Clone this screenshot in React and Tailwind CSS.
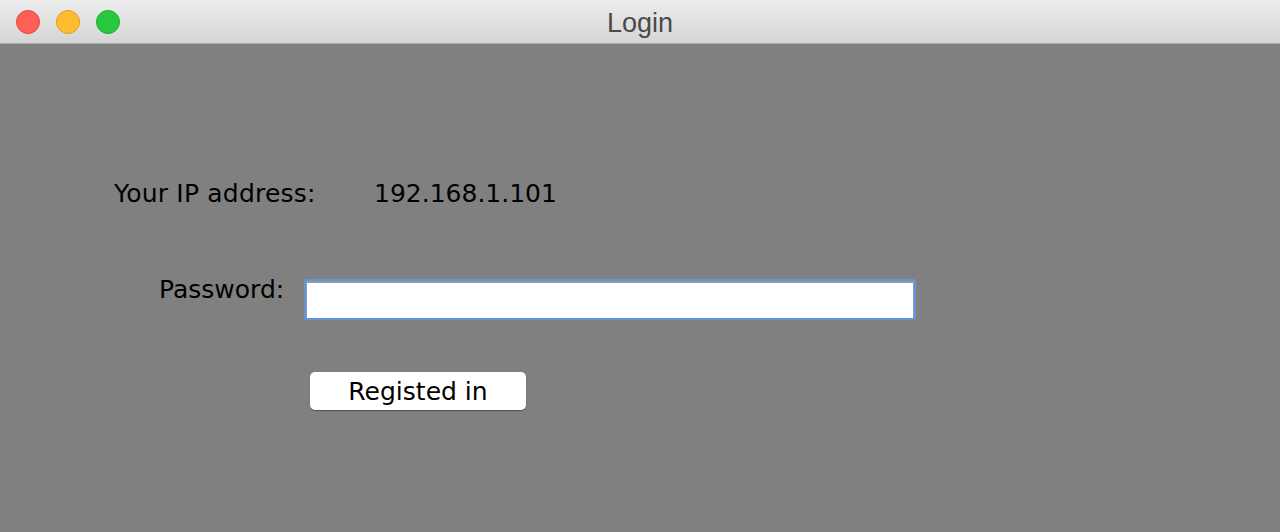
import React from 'react';

export default function App() {
  const font = { fontFamily: '"DejaVu Sans", "Liberation Sans", sans-serif' };

  return (
    <div className="w-[1280px] h-[532px] flex flex-col bg-[#808080] overflow-hidden" style={font}>
      {/* title bar */}
      <div className="relative h-[44px] shrink-0 flex items-center bg-gradient-to-b from-[#ececec] to-[#d5d5d5] border-b border-[#a8a8a8]">
        <div className="flex items-center gap-4 pl-4">
          <span className="w-6 h-6 rounded-full bg-[#fe5f57] border border-[#e2463f]" />
          <span className="w-6 h-6 rounded-full bg-[#febc2e] border border-[#de9f22]" />
          <span className="w-6 h-6 rounded-full bg-[#28c840] border border-[#1eab2e]" />
        </div>
        <div className="absolute inset-0 pt-[3px] flex items-center justify-center text-[27px] text-[#4a4a4a]" style={{ fontFamily: '"Liberation Sans", sans-serif' }}>
          Login
        </div>
      </div>

      {/* form */}
      <div className="flex flex-col pt-[135px] text-[25px] text-black">
        <div className="flex items-center h-[30px]">
          <span className="pl-[114px] w-[374px] tracking-[0.2px]">Your IP address:</span>
          <span>192.168.1.101</span>
        </div>

        <div className="flex items-start mt-[70px]">
          <span className="pl-[159px] w-[304px] leading-[30px] -mt-[4px]">Password:</span>
          <div className="w-[612px] h-[41px] border-2 border-[#5e95dc] rounded-[2px] p-px bg-[#9a9a9a]">
            <input className="w-full h-full bg-white outline-none" />
          </div>
        </div>

        <div className="pl-[310px] mt-[52px]">
          <button className="w-[216px] h-[38px] bg-white rounded-[5px] shadow-[0_1px_1px_rgba(0,0,0,0.35)] text-[25px] leading-none text-black">
            Registed in
          </button>
        </div>
      </div>
    </div>
  );
}
